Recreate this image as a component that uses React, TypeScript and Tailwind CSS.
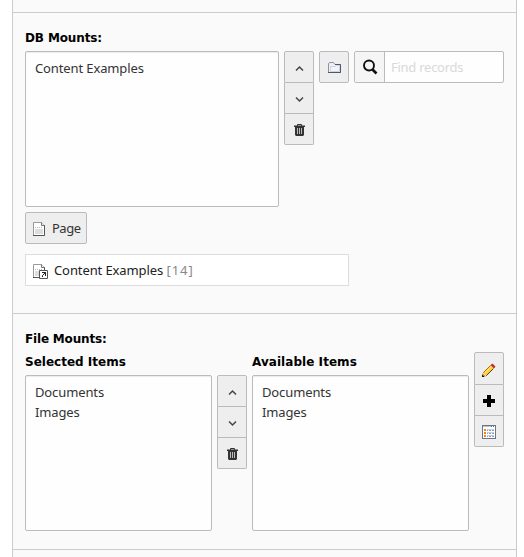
import React from "react";

const Btn = ({ h, first, last, children }: { h: string; first?: boolean; last?: boolean; children: React.ReactNode }) => (
  <button className={`flex w-[30px] items-center justify-center border-x border-b border-[#bbb] bg-[#eee] pt-0.5 ${h} ${first ? "rounded-t-[2px] border-t" : ""} ${last ? "rounded-b-[2px]" : ""}`}>
    {children}
  </button>
);

const Chevron = ({ down }: { down?: boolean }) => (
  <svg width="16" height="16" viewBox="0 0 16 16" fill="none" stroke="#444" strokeWidth="1.5">
    <path d={down ? "M5 6.5L8.5 10L12 6.5" : "M5 10.5L8.5 7L12 10.5"} />
  </svg>
);

const Trash = () => (
  <svg width="16" height="16" viewBox="0 0 16 16">
    <path d="M6.5 4V2.5H10.5V4" fill="none" stroke="#333" />
    <path d="M3 3.5H14V5H13V13L12 14H5L4 13V5H3Z" fill="#333" />
    <path d="M6.5 6V12M8.5 6V12M10.5 6V12" stroke="#bbb" />
  </svg>
);

const MoveButtons = () => (
  <div className="flex flex-col">
    <Btn h="h-8" first><Chevron /></Btn>
    <Btn h="h-[31px]"><Chevron down /></Btn>
    <Btn h="h-[31px]" last><Trash /></Btn>
  </div>
);

const PageIcon = ({ link }: { link?: boolean }) => (
  <svg width="16" height="16" viewBox="0 0 16 16">
    <path d="M.5 1.5H8.5L11.5 4.5V14.5H.5Z" fill="#fff" stroke="#999" />
    <path d="M11.5 4V14.5H0" fill="none" stroke="#555" />
    <path d="M8.5 1.5V4.5H11.5" fill="#eee" stroke="#777" />
    <path d="M2 6.5H10" stroke="#bbb" strokeDasharray="1 1" />
    <path d="M2 8H10V13H2Z" fill="#ddd" />
    {link && (
      <>
        <path d="M6.5 7.5H14.5V15.5H6.5Z" fill="#fff" stroke="#555" />
        <path d="M9 9.5H12.5V13M12.5 9.5L11 11M9.5 14V12.5L11.5 10.5" fill="none" stroke="#222" />
      </>
    )}
  </svg>
);

const Folder = () => (
  <svg width="16" height="16" viewBox="0 0 16 16" fill="none">
    <path d="M2.5 12.5V3.5L4 2.5H7.5L9 4.5H14.5V12.5Z" fill="#eeeef5" stroke="#8991a6" />
    <path d="M4.5 11.5V6.5H9.5L10.5 5.5H13.5V11.5Z" fill="#f4f4f8" stroke="#d0d3df" />
    <path d="M9 4.5H14.5V12.5H2" stroke="#50566b" />
  </svg>
);

const Search = () => (
  <svg width="16" height="16" viewBox="0 0 16 16" fill="none" stroke="#111">
    <circle cx="7" cy="6.5" r="5" strokeWidth="1.9" />
    <path d="M10.5 10.5L14.5 14.5" strokeWidth="2.6" />
  </svg>
);

const Pencil = () => (
  <svg width="16" height="16" viewBox="0 0 16 16">
    <path d="M1.5 14.5L2.5 10.5L10.5 2.5L13.5 5.5L5.5 13.5Z" fill="#fc3" stroke="#a87010" />
    <path d="M4 11L11 4" stroke="#ffe45e" strokeWidth="1.5" />
    <path d="M5.5 13.5L12.5 6.5" stroke="#594016" />
    <path d="M9.5 3.5L11.5 1.5L14.5 4.5L12.5 6.5Z" fill="#d33022" />
    <path d="M9.5 3.5L12.5 6.5" stroke="#ccc" />
    <path d="M1 15V12.5L3.5 15Z" fill="#111" />
    <path d="M2 11L5 14" stroke="#f5dfbd" />
  </svg>
);

const ListIcon = () => (
  <svg width="16" height="16" viewBox="0 0 16 16" shapeRendering="crispEdges">
    <path d="M1 1H15V15H1Z" fill="#69758c" />
    <path d="M2 3H14V14H2Z" fill="#fff" />
    <path d="M2 2H10V3H2Z" fill="#bdc5d1" />
    <path d="M11 2H12V3H11ZM13 2H14V3H13Z" fill="#fff" />
    <path d="M3 5H5V7H3ZM3 8H5V10H3ZM3 11H5V13H3Z" fill="#ff7f0e" />
    <path d="M6 5H13V6H6ZM6 8H13V9H6ZM6 11H13V12H6Z" fill="#c5cedd" />
    <path d="M6 6H7V7H6ZM8 6H10V7H8ZM11 6H13V7H11ZM6 9H7V10H6ZM8 9H10V10H8ZM11 9H13V10H11ZM6 12H7V13H6ZM8 12H10V13H8ZM11 12H13V13H11Z" fill="#909bb0" />
  </svg>
);

const ListBox = ({ w, items }: { w: string; items: string[] }) => (
  <div className={`h-[156px] rounded-[2px] border border-[#bbb] bg-[#fefefe] px-[9px] py-1.5 leading-5 tracking-[-0.12px] text-[#333] shadow-[inset_0_1px_1px_rgba(0,0,0,0.075)] ${w}`}>
    {items.map((item) => <div key={item}>{item}</div>)}
  </div>
);

export default function App() {
  return (
    <div className="h-[557px] w-[524px] overflow-hidden bg-white pl-3 font-['Verdana','Noto_Sans',sans-serif] text-[13px]">
      <main className="h-[557px] w-[505px] border-x border-[#ccc] bg-[#fafafa]">
        <div className="h-[13px] border-b border-[#ccc]" />
        <section className="h-[301px] border-b border-[#ccc] px-3 pt-[15px]">
          <h2 className="h-[23px] font-['DejaVu_Sans',sans-serif] text-[12px] leading-5 font-bold tracking-[-0.12px] text-black">DB Mounts:</h2>
          <div className="flex items-start gap-[5px]">
            <ListBox w="w-[254px]" items={["Content Examples"]} />
            <MoveButtons />
            <Btn h="h-8" first last><Folder /></Btn>
            <div className="flex h-8 w-[150px] overflow-hidden rounded-[2px] border border-[#bbb] bg-[#fefefe]">
              <span className="flex w-[30px] items-center justify-center border-r border-[#bbb] bg-[#f5f5f5]"><Search /></span>
              <input className="min-w-0 flex-1 px-1.5 pt-0.5 tracking-[-0.26px] outline-none placeholder:text-[#d9d9d9]" placeholder="Find records" />
            </div>
          </div>
          <button className="mt-[5px] flex h-8 w-[62px] items-center gap-[3px] rounded-[2px] border border-[#bbb] bg-[#eee] pt-0.5 pl-[7px] tracking-[-0.5px] text-[#333]"><PageIcon />Page</button>
          <div className="mt-2.5 flex h-8 w-[324px] items-center gap-[5px] border border-[#ddd] bg-white pt-0.5 pl-[7px] text-[#222]">
            <PageIcon link />
            <span className="tracking-[-0.1px]">Content Examples <span className="tracking-[1px] text-[#888]">[14]</span></span>
          </div>
        </section>
        <section className="h-[236px] border-b border-[#ccc] px-3 pt-[15px]">
          <h2 className="h-[23px] font-['DejaVu_Sans',sans-serif] text-[12px] leading-5 font-bold tracking-[-0.18px] text-black">File Mounts:</h2>
          <div className="flex items-start">
            <div>
              <h3 className="h-[23px] font-['DejaVu_Sans',sans-serif] text-[12px] leading-5 font-bold text-black">Selected Items</h3>
              <ListBox w="w-[187px]" items={["Documents", "Images"]} />
            </div>
            <div className="mt-[23px] ml-[5px]"><MoveButtons /></div>
            <div className="ml-[5px]">
              <h3 className="h-[23px] font-['DejaVu_Sans',sans-serif] text-[12px] leading-5 font-bold tracking-[0.05px] text-black">Available Items</h3>
              <ListBox w="w-[217px]" items={["Documents", "Images"]} />
            </div>
            <div className="ml-[5px] flex flex-col">
              <Btn h="h-[33px]" first><Pencil /></Btn>
              <Btn h="h-[31px]">
                <svg width="16" height="16" viewBox="0 0 16 16"><path d="M6 2H10V6H14V10H10V14H6V10H2V6H6Z" fill="#000" /></svg>
              </Btn>
              <Btn h="h-[31px]" last><ListIcon /></Btn>
            </div>
          </div>
        </section>
      </main>
    </div>
  );
}
